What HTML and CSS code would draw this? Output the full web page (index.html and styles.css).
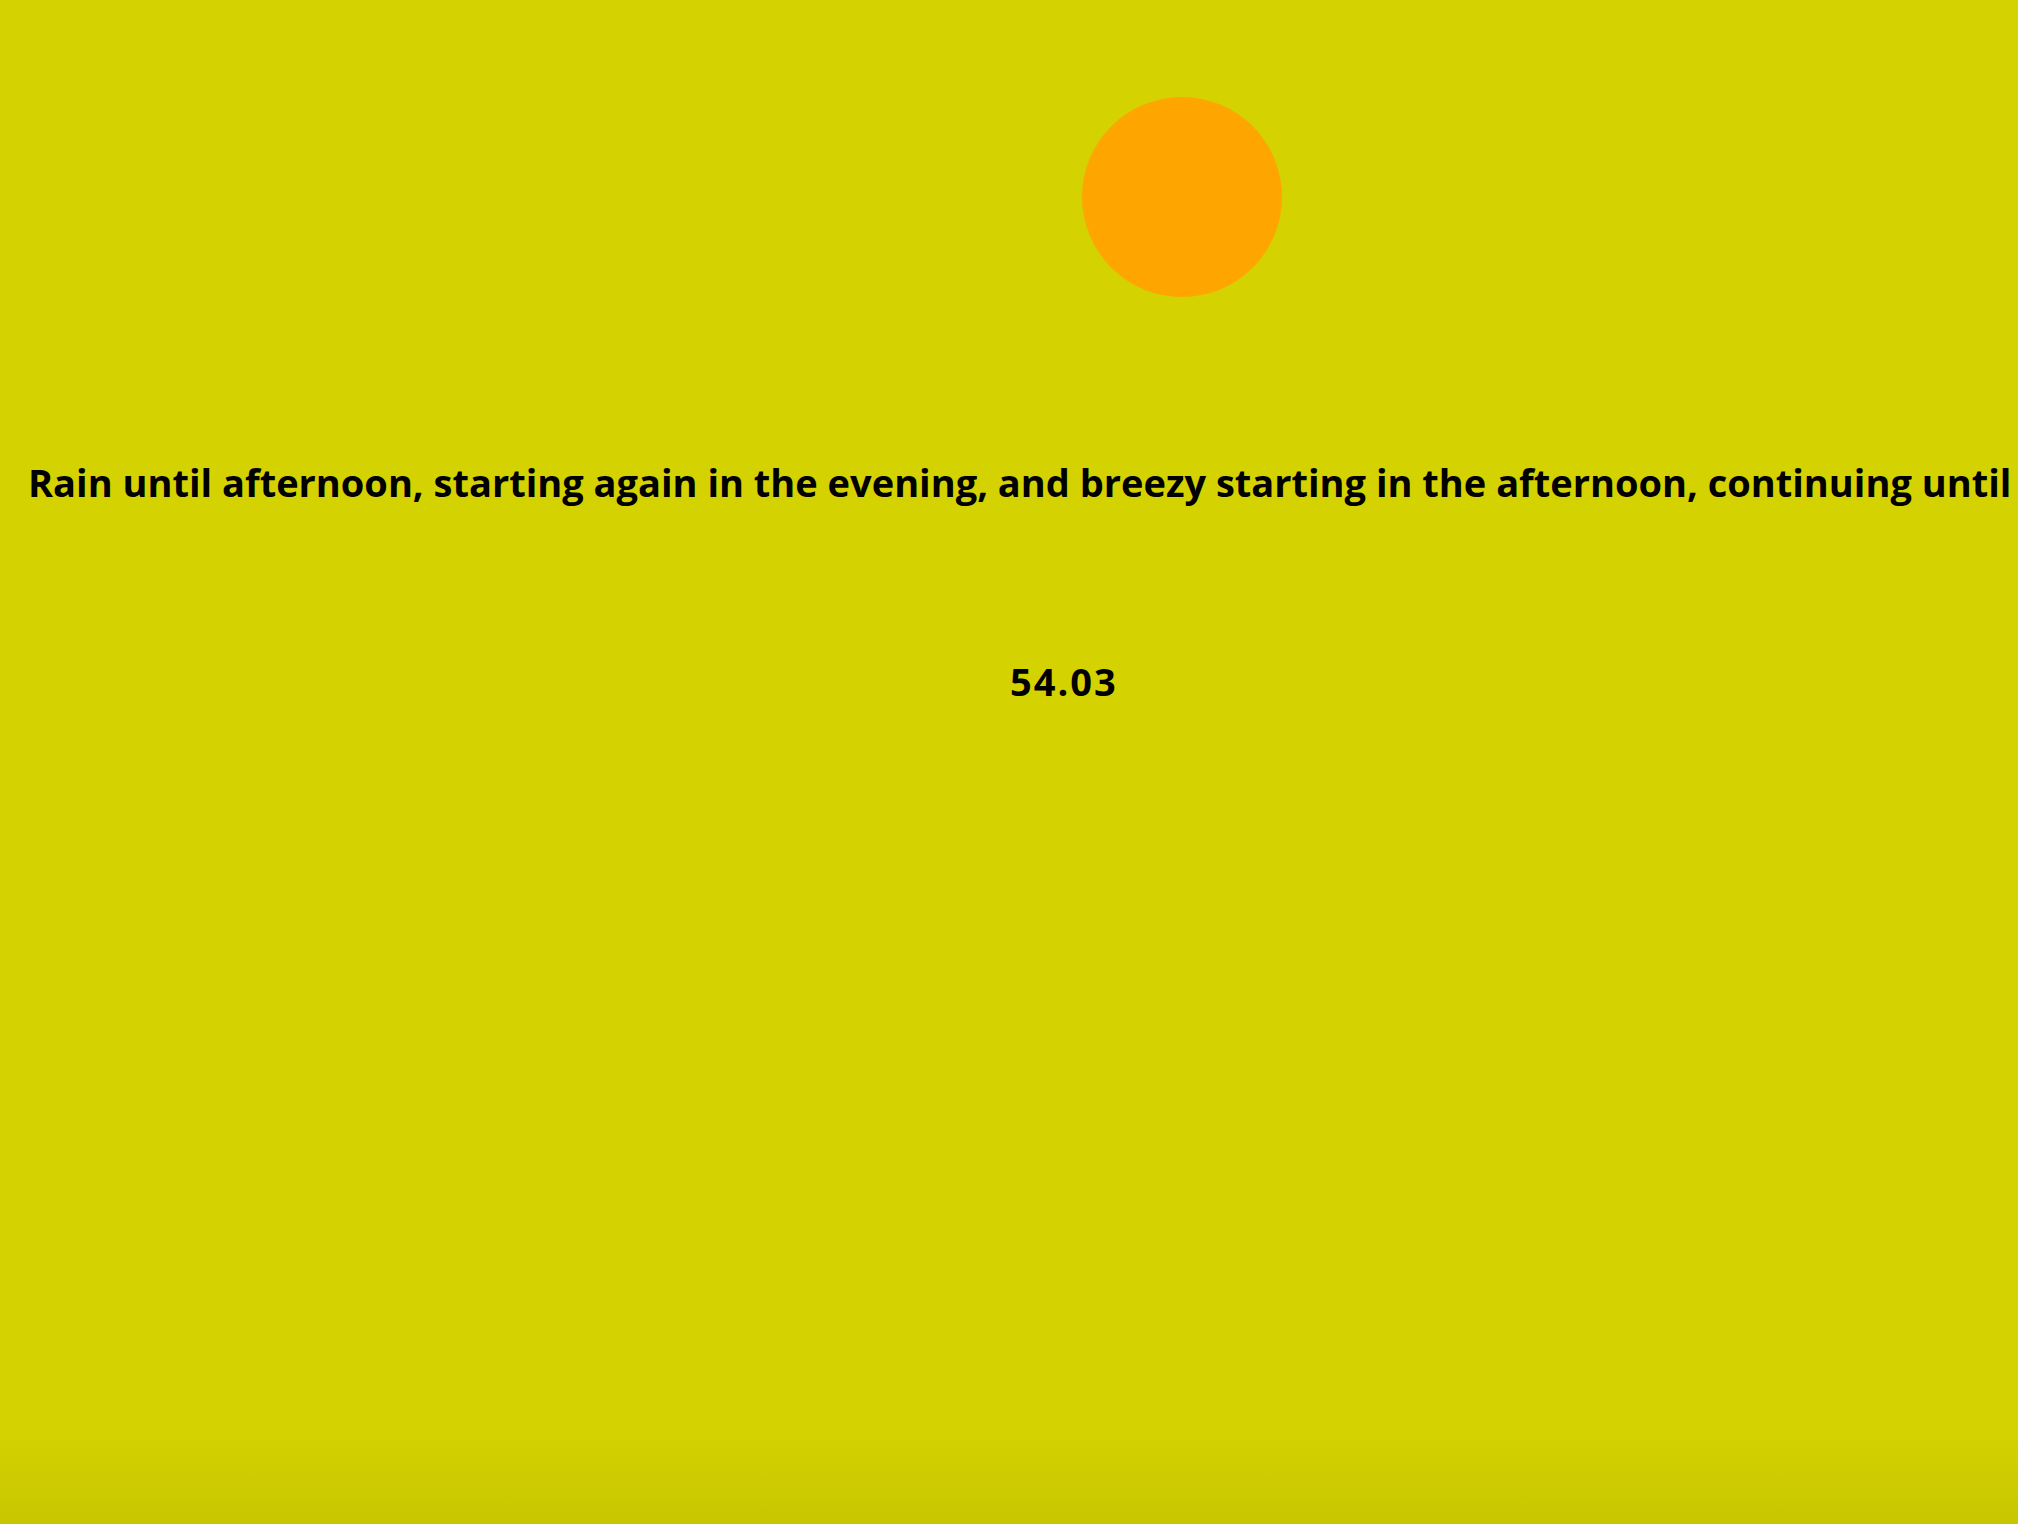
FILE: index.html
```html
<!DOCTYPE html>
<html lang="en">
<head>
<meta charset="utf-8">
<title>Weather</title>
<link rel="stylesheet" href="styles.css">
</head>
<body>
<main class="weather">
  <div class="sun-row"><div class="sun"></div></div>
  <p class="summary">Rain until afternoon, starting again in the evening, and breezy starting in the afternoon, continuing until evening.</p>
  <p class="temp">54.03</p>
</main>
</body>
</html>
```
FILE: styles.css
```css
html, body {
  margin: 0;
  padding: 0;
}
body {
  width: 100vw;
  height: 100vh;
  overflow: hidden;
  background: linear-gradient(to bottom, #d4d200 0, #d4d200 1430px, #c8c600 100%);
  font-family: "Open Sans", Lato, sans-serif;
  color: #000;
}
.weather {
  display: flex;
  flex-direction: column;
}
.sun-row {
  padding-top: 97px;
  padding-left: 1082px;
}
.sun {
  width: 200px;
  height: 200px;
  border-radius: 50%;
  background: #ffa500;
}
.summary {
  margin: 163px 0 0 0;
  padding-left: 28px;
  white-space: nowrap;
  font-size: 38px;
  font-weight: 700;
  line-height: 45px;
}
.temp {
  margin: 154px 0 0 1010px;
  font-size: 38px;
  font-weight: 700;
  line-height: 45px;
  letter-spacing: 2px;
}
```
